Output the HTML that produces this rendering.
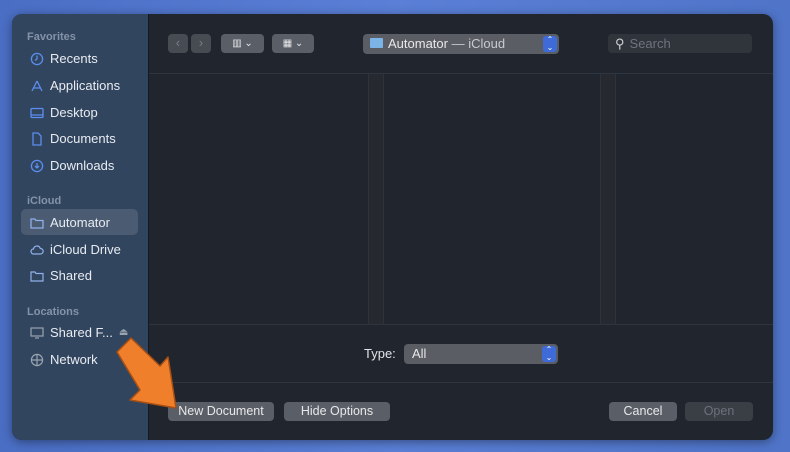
<!DOCTYPE html><html><head><style>
body{margin:0;width:790px;height:452px;background:linear-gradient(90deg,#4a6ec4,#5a7fd6 50%,#4f74c8);font-family:"Liberation Sans",sans-serif;overflow:hidden;position:relative}
.win{position:absolute;left:12px;top:14px;width:761px;height:426px;border-radius:10px;background:#21262e;overflow:hidden;box-shadow:0 2px 10px rgba(0,0,0,.4)}
.side{position:absolute;left:0;top:0;width:136px;height:426px;background:#32455e;border-right:1px solid #151a22}
.h{position:absolute;left:15px;font-size:11px;color:#8393a8;font-weight:bold}
.it{position:absolute;left:18px;font-size:13px;color:#e8ecf2;display:flex;align-items:center}
.it svg{width:14px;height:14px;margin-right:6px}
.sel{position:absolute;left:9px;top:195px;width:117px;height:26px;background:#4a5b72;border-radius:5px}
.btn{position:absolute;background:#5a5e66;border-radius:4px;color:#e8e8ea;font-size:12.5px;text-align:center;line-height:19px;height:19px}
.line{position:absolute;left:137px;right:0;height:1px;background:#30363f}
.pop{position:absolute;background:#5a5d63;border-radius:4px;height:20px;color:#e8e8ea;font-size:13px;line-height:20px}
.st{position:absolute;right:2px;top:2px;width:14px;height:16px;background:#3f6bd8;border-radius:3px;color:#fff;font-size:8px;line-height:8px;text-align:center}
</style></head><body>
<div class="win">
<div class="side">
<div class="h" style="top:17px">Favorites</div>
<div class="it" style="top:37px"><svg viewBox="0 0 14 14" fill="none" stroke="#5b8ef0" stroke-width="1.3"><circle cx="7" cy="7" r="5.6"/><path d="M7 3.5V7L5 8.5"/></svg>Recents</div>
<div class="it" style="top:64px"><svg viewBox="0 0 14 14" fill="none" stroke="#5b8ef0" stroke-width="1.3"><path d="M7 2L2 12M7 2l5 10M3 9h8"/></svg>Applications</div>
<div class="it" style="top:91px"><svg viewBox="0 0 14 14" fill="none" stroke="#5b8ef0" stroke-width="1.3"><rect x="1" y="2.5" width="12" height="9" rx="1"/><path d="M1 9h12"/></svg>Desktop</div>
<div class="it" style="top:117px"><svg viewBox="0 0 14 14" fill="none" stroke="#5b8ef0" stroke-width="1.3"><path d="M3 1h5l3 3v9H3z"/></svg>Documents</div>
<div class="it" style="top:144px"><svg viewBox="0 0 14 14" fill="none" stroke="#5b8ef0" stroke-width="1.3"><circle cx="7" cy="7" r="5.6"/><path d="M7 4v5M5 7l2 2 2-2"/></svg>Downloads</div>
<div class="h" style="top:181px">iCloud</div>
<div class="sel"></div>
<div class="it" style="top:201px"><svg viewBox="0 0 14 14" fill="none" stroke="#8fb0e8" stroke-width="1.3"><path d="M1 3h4l1 1.5h7V12H1z"/></svg>Automator</div>
<div class="it" style="top:228px"><svg viewBox="0 0 14 14" fill="none" stroke="#8fb0e8" stroke-width="1.2"><path d="M3.5 11a2.5 2.5 0 010-5 3.5 3.5 0 016.8-.5A2.7 2.7 0 0110.5 11z"/></svg>iCloud Drive</div>
<div class="it" style="top:254px"><svg viewBox="0 0 14 14" fill="none" stroke="#8fb0e8" stroke-width="1.2"><path d="M1 3h4l1 1.5h7V12H1z"/></svg>Shared</div>
<div class="h" style="top:292px">Locations</div>
<div class="it" style="top:311px"><svg viewBox="0 0 14 14" fill="none" stroke="#9aa3b0" stroke-width="1.2"><rect x="1" y="2" width="12" height="8"/><path d="M5 12h4"/></svg>Shared F... <span style="color:#9aa3b0;font-size:10px;margin-left:6px">⏏</span></div>
<div class="it" style="top:338px"><svg viewBox="0 0 14 14" fill="none" stroke="#9aa3b0" stroke-width="1.2"><circle cx="7" cy="7" r="5.6"/><path d="M1.5 7h11M7 1.5v11"/></svg>Network</div>
</div>
<div class="btn" style="left:156px;top:20px;width:20px;height:19px;background:#474b52;color:#7a7e86">‹</div>
<div class="btn" style="left:179px;top:20px;width:20px;height:19px;background:#474b52;color:#7a7e86">›</div>
<div class="btn" style="left:209px;top:20px;width:43px;font-size:10px">▥ ⌄</div>
<div class="btn" style="left:260px;top:20px;width:42px;font-size:10px">▦ ⌄</div>
<div class="pop" style="left:351px;top:20px;width:196px"><span style="display:inline-block;width:13px;height:10px;background:#7cb4e8;margin:0 5px 0 7px;border-radius:1px"></span>Automator <span style="color:#c8cad0">— iCloud</span><div class="st">⌃<br>⌄</div></div>
<div style="position:absolute;left:596px;top:20px;width:144px;height:19px;background:#30343b;border-radius:4px;color:#6f747c;font-size:13px;line-height:19px"><span style="color:#d0d2d6;margin:0 5px 0 7px">⚲</span>Search</div>
<div class="line" style="top:59px"></div>
<div style="position:absolute;left:356px;top:60px;width:14px;height:250px;background:#262a30;border-left:1px solid #30343a;border-right:1px solid #30343a"></div>
<div style="position:absolute;left:588px;top:60px;width:14px;height:250px;background:#262a30;border-left:1px solid #30343a;border-right:1px solid #30343a"></div>
<div class="line" style="top:310px"></div>
<div style="position:absolute;left:352px;top:332px;color:#e0e2e6;font-size:13px">Type:</div>
<div class="pop" style="left:392px;top:330px;width:154px;padding-left:8px;box-sizing:border-box">All<div class="st">⌃<br>⌄</div></div>
<div class="line" style="top:368px"></div>
<div class="btn" style="left:156px;top:388px;width:106px">New Document</div>
<div class="btn" style="left:272px;top:388px;width:106px">Hide Options</div>
<div class="btn" style="left:597px;top:388px;width:68px">Cancel</div>
<div class="btn" style="left:673px;top:388px;width:68px;background:#3a3e45;color:#6d7179">Open</div>
</div>
<svg style="position:absolute;left:0;top:0" width="790" height="452"><path d="M117 352L131 338 160 366 168 357 176 408 130 400 140 390z" fill="#f07f2c" stroke="#a84f14" stroke-width="1.5" stroke-linejoin="round"/></svg>
</body></html>
